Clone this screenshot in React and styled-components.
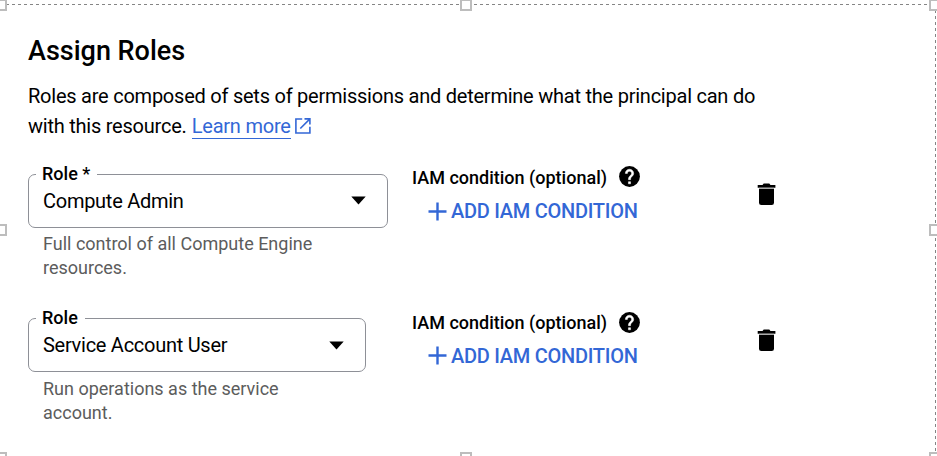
import React from "react";
import styled, { createGlobalStyle } from "styled-components";

const GlobalStyle = createGlobalStyle`
  * { box-sizing: border-box; }
  body {
    margin: 0;
    overflow: hidden;
    background: #fff;
    color: #000;
    font-family: Roboto, "Liberation Sans", sans-serif;
  }
`;

const Canvas = styled.main`
  position: relative;
  width: 937px;
  height: 456px;
  overflow: hidden;
  padding: 35px 0 0 28px;
`;

const Frame = styled.svg`
  position: absolute;
  inset: 0;
  pointer-events: none;
`;

const Title = styled.h1`
  margin: 0;
  font-size: 27px;
  font-weight: 500;
  line-height: 32px;
`;

const Description = styled.p`
  margin: 14px 0 0;
  width: 760px;
  font-size: 20px;
  line-height: 30px;
  letter-spacing: -0.235px;
  white-space: nowrap;
`;

const Link = styled.a`
  margin-left: 0.5px;
  color: #3367d6;
  border-bottom: 1px solid #3367d6;
  text-decoration: none;
`;

const LinkIcon = styled.svg`
  margin-left: 4px;
  vertical-align: -1px;
  color: #3367d6;
`;

const RoleList = styled.div`
  display: flex;
  flex-direction: column;
`;

const RoleRow = styled.section`
  display: grid;
  grid-template-columns: 384px 345px auto;
  height: 144.5px;
`;

const RoleField = styled.div`
  padding-top: 21.5px;
`;

const Select = styled.fieldset`
  display: flex;
  align-items: center;
  justify-content: space-between;
  margin: 0;
  width: ${(p) => p.$width}px;
  height: 65px;
  min-width: 0;
  padding: 0 21px 11px 14px;
  border: 1px solid #8e9097;
  border-radius: 7px;
`;

const Legend = styled.legend`
  margin-left: -7px;
  padding: 0 7px 1px 6px;
  font-size: 18px;
  font-weight: 500;
  line-height: 22px;
`;

const Value = styled.span`
  font-size: 20px;
  line-height: 24px;
  letter-spacing: -0.27px;
`;

const Hint = styled.p`
  margin: 4.5px 0 0 15px;
  width: 280px;
  color: #5c5c5c;
  font-size: 18px;
  line-height: 24px;
`;

const Condition = styled.div`
  display: flex;
  flex-direction: column;
  align-items: flex-start;
  padding-top: 24.5px;
`;

const ConditionLabel = styled.div`
  display: flex;
  align-items: center;
  gap: 10px;
  height: 24px;
  font-size: 18px;
  font-weight: 500;
`;

const HelpMark = styled.svg`
  margin-top: ${(p) => p.$lift}px;
`;

const AddButton = styled.button`
  display: flex;
  align-items: center;
  gap: 4px;
  margin: 8.5px 0 0 16px;
  padding: 0;
  border: 0;
  background: none;
  color: #3367d6;
  font: 500 20px/26px Roboto, "Liberation Sans", sans-serif;
  letter-spacing: -0.27px;
`;

const DeleteButton = styled.button`
  align-self: start;
  justify-self: start;
  display: flex;
  margin-top: ${(p) => p.$top}px;
  padding: 0;
  border: 0;
  background: none;
  color: #000;
`;

const HANDLES = [
  [-5, -1], [460, -1], [929, -1],
  [-5, 224], [929, 224],
  [-5, 452], [460, 452], [929, 452],
];

function SelectionFrame() {
  return (
    <Frame width="937" height="456" viewBox="0 0 937 456" fill="none">
      <path d="M0 4.5H935M935.5 4V456" stroke="#858585" strokeDasharray="3 3" />
      {HANDLES.map(([x, y]) => (
        <rect key={`${x},${y}`} x={x + 1} y={y + 1} width="10" height="10" fill="#fff" stroke="#bdbdbd" strokeWidth="2" />
      ))}
    </Frame>
  );
}

const ExternalIcon = () => (
  <LinkIcon width="16" height="16" viewBox="0 0 16 16" fill="none" stroke="currentColor" strokeWidth="1.6">
    <path d="M7.200 1H.9v14h14V8.800M9.500 .9h5.400v5.500M14.700 1.100L5.300 10.500" />
  </LinkIcon>
);

const CaretIcon = () => (
  <svg width="15" height="9" viewBox="0 0 15 9"><path d="M.3.5h14.4L7.5 8.5z" /></svg>
);

const HelpIcon = ({ lift }) => (
  <HelpMark $lift={lift} width="25" height="25" viewBox="0 0 24 24">
    <circle cx="12" cy="12" r="10" />
    <path
      d="M11 19h2v-2h-2zM15.07 11.250l-.9.92C13.450 12.900 13 13.500 13 15h-2v-.5c0-1.100.450-2.100 1.170-2.830l1.240-1.260c.370-.360.590-.860.590-1.410 0-1.100-.9-2-2-2s-2 .9-2 2H8c0-2.210 1.790-4 4-4s4 1.790 4 4c0 .88-.360 1.680-.930 2.250z"
      fill="#fff"
      stroke="#fff"
      strokeWidth=".5"
    />
  </HelpMark>
);

const PlusIcon = () => (
  <svg width="19" height="19" viewBox="0 0 19 19"><path d="M9.5.5v18M.5 9.5h18" stroke="currentColor" strokeWidth="2.4" /></svg>
);

const TrashIcon = () => (
  <svg width="19" height="23" viewBox="0 0 19 23">
    <path d="M.7 2H5.500L6.700.5h5.600L13.500 2h4.900v2.700H.7z" />
    <path d="M2 4.700h15v1.400H2z" fill="#aaa" />
    <path d="M2 6h15V19.700q0 2.300-2.300 2.300H4.300Q2 22 2 19.700z" />
  </svg>
);

const ROLES = [
  { label: "Role *", value: "Compute Admin", width: 360, hint: "Full control of all Compute Engine resources.", helpLift: -3, deleteTop: 42 },
  { label: "Role", value: "Service Account User", width: 338, hint: "Run operations as the service account.", helpLift: 0, deleteTop: 43.5 },
];

export default function App() {
  return (
    <>
      <GlobalStyle />
      <Canvas>
        <SelectionFrame />
        <Title>Assign Roles</Title>
        <Description>
          Roles are composed of sets of permissions and determine what the principal can do
          <br />
          with this resource. <Link>Learn more</Link>
          <ExternalIcon />
        </Description>
        <RoleList>
          {ROLES.map((role) => (
            <RoleRow key={role.value}>
              <RoleField>
                <Select $width={role.width}>
                  <Legend>{role.label}</Legend>
                  <Value>{role.value}</Value>
                  <CaretIcon />
                </Select>
                <Hint>{role.hint}</Hint>
              </RoleField>
              <Condition>
                <ConditionLabel>
                  IAM condition (optional)
                  <HelpIcon lift={role.helpLift} />
                </ConditionLabel>
                <AddButton>
                  <PlusIcon />
                  ADD IAM CONDITION
                </AddButton>
              </Condition>
              <DeleteButton $top={role.deleteTop} aria-label="Delete role">
                <TrashIcon />
              </DeleteButton>
            </RoleRow>
          ))}
        </RoleList>
      </Canvas>
    </>
  );
}
